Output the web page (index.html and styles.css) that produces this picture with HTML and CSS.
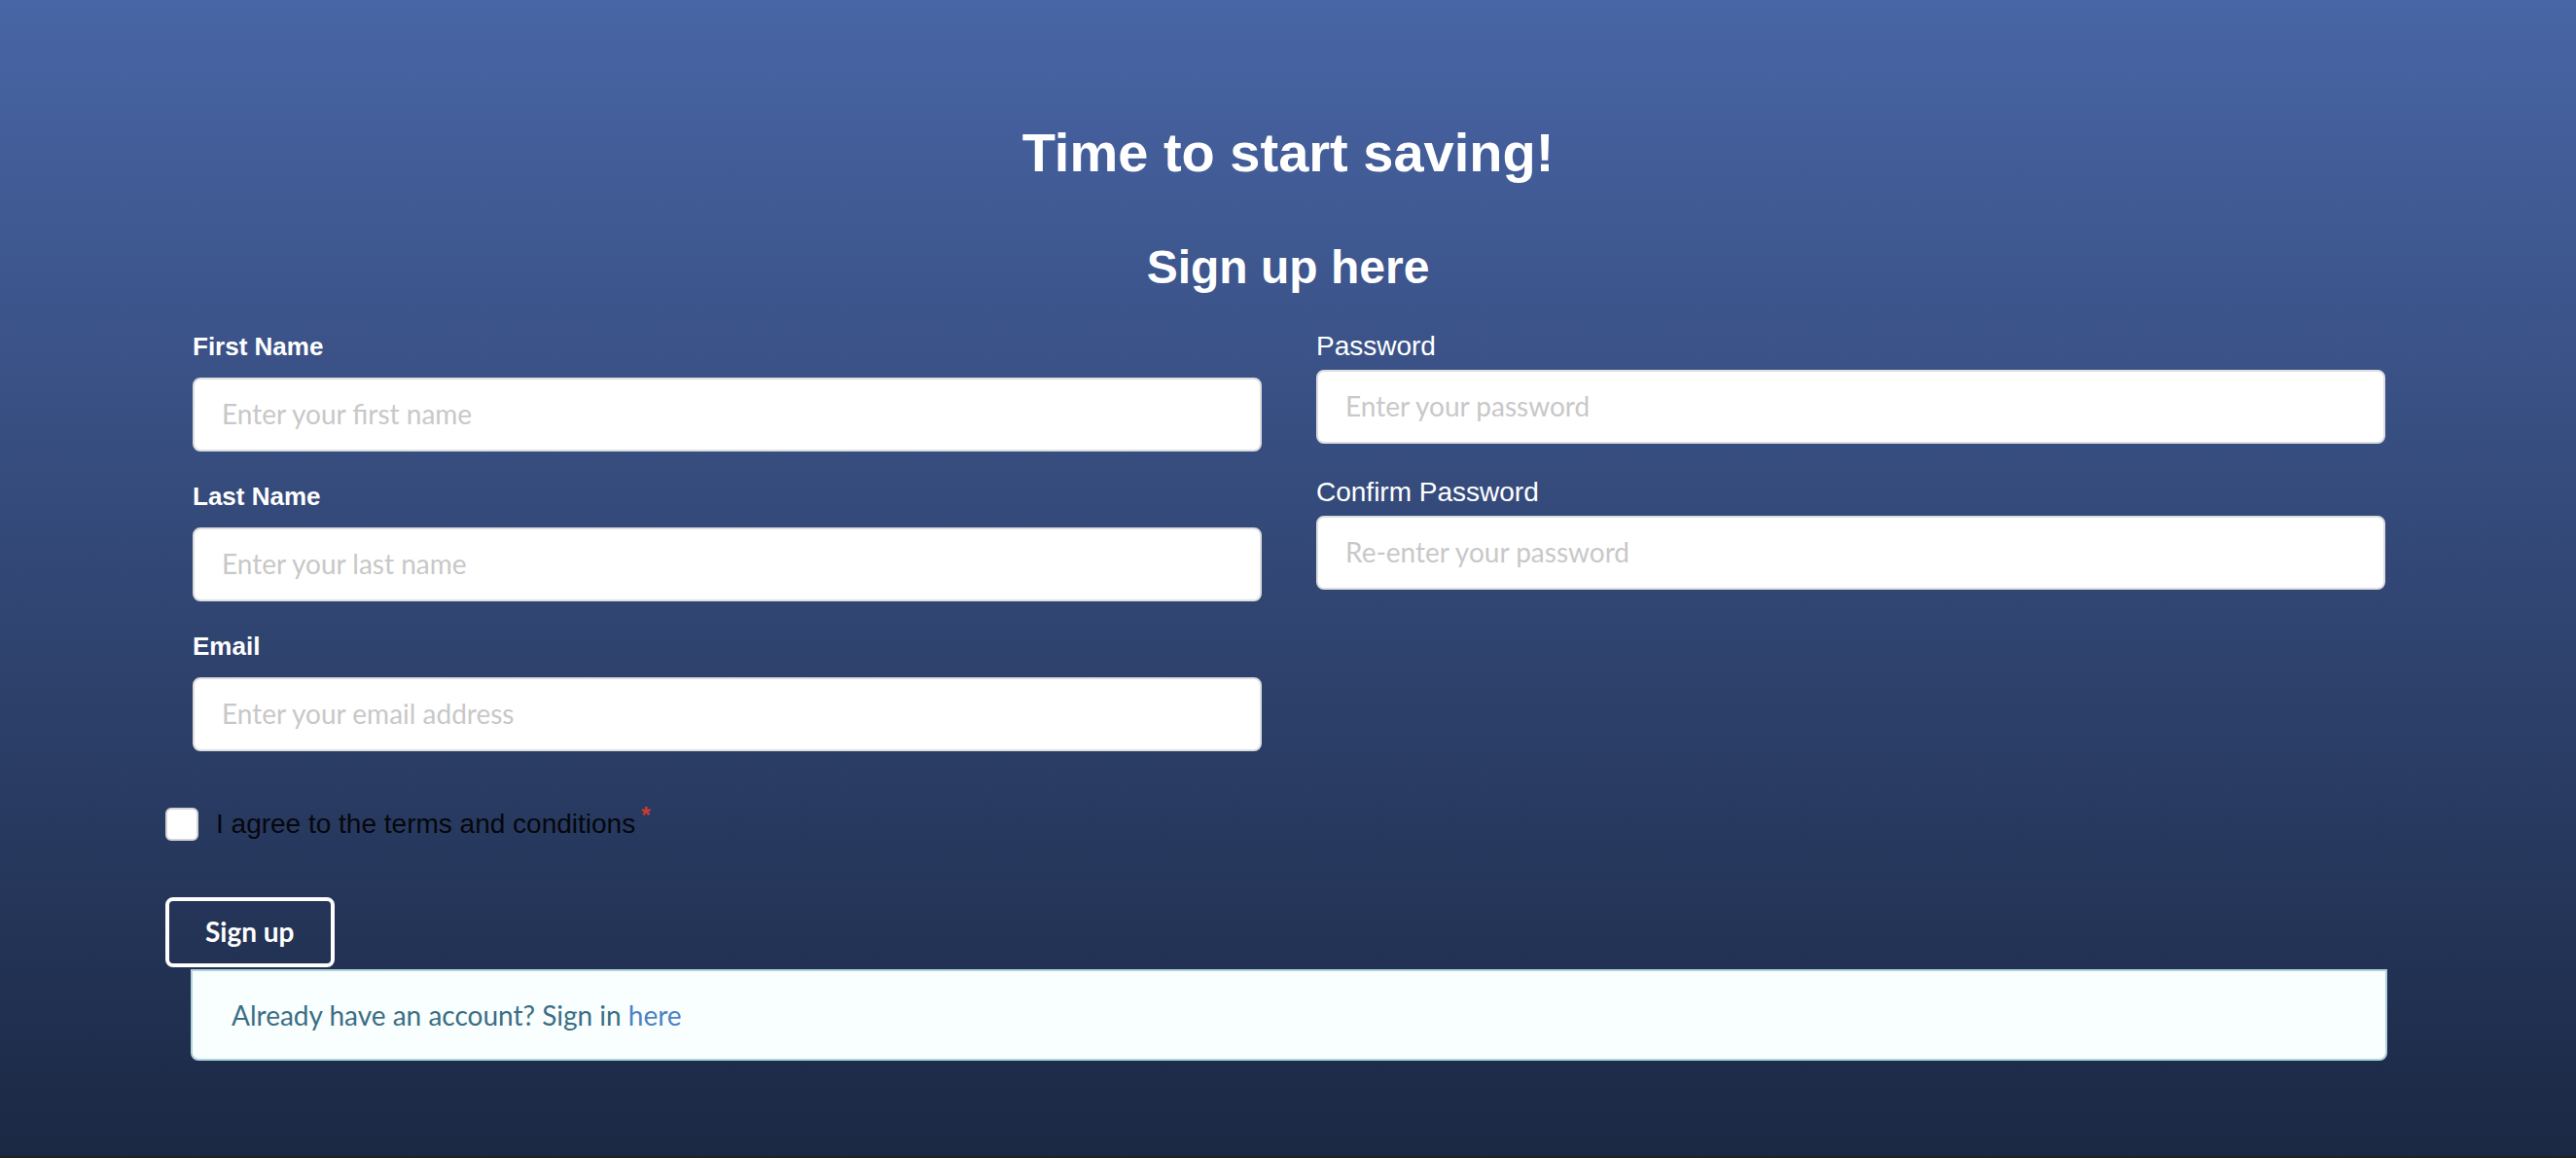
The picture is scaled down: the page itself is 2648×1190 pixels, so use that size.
FILE: index.html
```html
<!DOCTYPE html>
<html lang="en">
<head>
<meta charset="utf-8">
<meta name="viewport" content="width=device-width, initial-scale=1">
<title>Sign up</title>
<link rel="stylesheet" href="styles.css">
</head>
<body>
<main class="page">
  <h1 class="title">Time to start saving!</h1>
  <h2 class="subtitle">Sign up here</h2>
  <form class="form">
    <div class="columns">
      <div class="column">
        <div class="field">
          <label class="label" for="first-name">First Name</label>
          <input class="input" id="first-name" type="text" placeholder="Enter your first name">
        </div>
        <div class="field">
          <label class="label" for="last-name">Last Name</label>
          <input class="input" id="last-name" type="text" placeholder="Enter your last name">
        </div>
        <div class="field">
          <label class="label" for="email">Email</label>
          <input class="input" id="email" type="email" placeholder="Enter your email address">
        </div>
      </div>
      <div class="column column-plain">
        <div class="field">
          <label class="label" for="password">Password</label>
          <input class="input" id="password" type="password" placeholder="Enter your password">
        </div>
        <div class="field">
          <label class="label" for="confirm">Confirm Password</label>
          <input class="input" id="confirm" type="password" placeholder="Re-enter your password">
        </div>
      </div>
    </div>
    <div class="terms">
      <input class="checkbox" id="terms" type="checkbox">
      <label class="terms-label" for="terms">I agree to the terms and conditions<span class="required">*</span></label>
    </div>
    <button class="button" type="submit">Sign up</button>
  </form>
  <p class="message">Already have an account? Sign in <a class="link" href="#">here</a></p>
</main>
</body>
</html>
```
FILE: styles.css
```css
* {
  box-sizing: border-box;
}

body {
  margin: 0;
  background: #222;
  font-family: "Liberation Sans", Arial, sans-serif;
  font-size: 28px;
  line-height: 36px;
  color: #fff;
}

.page {
  min-height: calc(100vh - 2px);
  padding: 120px 170px 98px;
  background: linear-gradient(#4865a5, #1b2844);
}

.title,
.subtitle {
  margin: 0;
  text-align: center;
  font-weight: 700;
}

.title {
  font-size: 56px;
  line-height: 74px;
}

.subtitle {
  margin: 50px 0 32px;
  font-size: 48px;
  line-height: 62px;
}

.form {
  display: flex;
  flex-direction: column;
  align-items: flex-start;
  gap: 58px;
}

.columns {
  display: grid;
  grid-template-columns: repeat(2, minmax(0, 1fr));
  gap: 56px;
  align-self: stretch;
  padding: 0 26px 0 28px;
}

.column {
  display: flex;
  flex-direction: column;
  gap: 28px;
}

.field {
  display: flex;
  flex-direction: column;
  gap: 14px;
}

.label {
  font-size: 26px;
  font-weight: 700;
}

.column-plain {
  gap: 32px;
}

.column-plain .field {
  gap: 6px;
}

.column-plain .label {
  font-size: 28px;
  font-weight: 400;
}

.input {
  width: 100%;
  height: 76px;
  padding: 0 28px 2px;
  border: 2px solid #dededf;
  border-radius: 8px;
  background: #fff;
  font-family: Lato, sans-serif;
  font-size: 28px;
  color: #222;
}

.input::placeholder {
  color: #c8c8c8;
  opacity: 1;
}

.terms {
  display: flex;
  align-items: center;
  gap: 18px;
  height: 34px;
  color: #05070c;
}

.checkbox {
  appearance: none;
  width: 34px;
  height: 34px;
  margin: 0;
  border: 2px solid #d4d4d5;
  border-radius: 6px;
  background: #fff;
}

.checkbox:checked {
  background: #4d82c5;
}

.terms-label {
  display: flex;
  align-items: flex-start;
  gap: 6px;
}

.required {
  font-size: 24px;
  line-height: 18px;
  font-weight: 700;
  color: #cc3b33;
}

.button {
  height: 72px;
  padding: 0 37px 2px;
  border: 4px solid #fff;
  border-radius: 8px;
  background: transparent;
  font-family: Lato, sans-serif;
  font-size: 28px;
  font-weight: 700;
  color: #fff;
}

.message {
  margin: 2px 24px 0 26px;
  padding: 27px 40px;
  border: 2px solid #b0d4dc;
  border-radius: 0 0 8px 8px;
  background: #f9ffff;
  font-family: Lato, sans-serif;
  color: #3b6e85;
}

.link {
  color: #4d82c5;
  text-decoration: none;
}

@media (max-width: 1000px) {
  .page {
    padding: 60px 24px;
  }

  .columns {
    grid-template-columns: minmax(0, 1fr);
  }
}
```
